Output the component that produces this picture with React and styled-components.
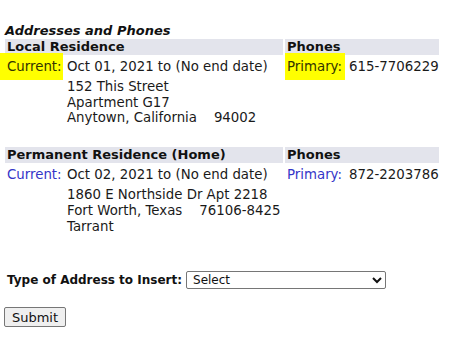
import React from "react";
import styled, { createGlobalStyle } from "styled-components";

const Global = createGlobalStyle`
  html, body { margin: 0; padding: 0; background: #ffffff; }
  body { font-family: "DejaVu Sans", Verdana, sans-serif; font-size: 13.33px; color: #1a1a1a; }
`;

const Page = styled.div`
  padding: 22px 0 0 5px;
  width: 469px;
  box-sizing: border-box;
`;

const Title = styled.h2`
  margin: 0;
  font-size: 13px;
  font-weight: bold;
  font-style: italic;
  line-height: 17px;
  color: #111;
`;

const Section = styled.div`
  display: grid;
  grid-template-columns: 278px 154px;
  column-gap: 2px;
  margin-top: ${(p) => p.$top}px;
`;

const HeadCell = styled.div`
  background: #e3e4ec;
  height: 16px;
  line-height: 16px;
  padding-left: 2px;
  font-size: 13px;
  font-weight: bold;
  color: #111;
`;

const Column = styled.div`
  display: flex;
  flex-direction: column;
`;

const EntryRow = styled.div`
  display: grid;
  grid-template-columns: ${(p) => p.$labelW}px auto;
  padding-left: 2px;
  margin-top: 3px;
  line-height: 17px;
`;

const Label = styled.span`
  position: relative;
  justify-self: start;
  color: ${(p) => (p.$hl ? "#333300" : "#3535c8")};
  z-index: 0;
  &::before {
    content: "";
    display: ${(p) => (p.$hl ? "block" : "none")};
    position: absolute;
    z-index: -1;
    top: -5px;
    bottom: -5px;
    left: ${(p) => p.$hlLeft}px;
    right: ${(p) => p.$hlRight}px;
    background: #ffff00;
  }
`;

const Value = styled.span`
  color: #1a1a1a;
  white-space: nowrap;
`;

const AddressLines = styled.div`
  margin-top: 4px;
  padding-left: 62px;
  line-height: 15.7px;
  white-space: pre;
`;

const FormRow = styled.div`
  display: flex;
  align-items: center;
  gap: 4px;
  margin-top: 37px;
  padding-left: 2px;
`;

const FormLabel = styled.label`
  font-size: 12px;
  font-weight: bold;
  color: #111;
`;

const Select = styled.select`
  width: 200px;
  height: 18px;
  font-family: "DejaVu Sans", Verdana, sans-serif;
  font-size: 12px;
  padding: 0 0 0 2px;
  border: 1px solid #767676;
  border-radius: 2px;
  background: #fff;
  color: #111;
`;

const Submit = styled.button`
  margin-top: 18px;
  margin-left: -1px;
  width: 62px;
  height: 20px;
  padding: 0;
  font-family: "DejaVu Sans", Verdana, sans-serif;
  font-size: 13px;
  color: #111;
  background: #efefef;
  border: 1px solid #767676;
  border-radius: 2px;
`;

function Residence({ top, title, hl, date, lines, phone }) {
  return (
    <Section $top={top}>
      <HeadCell>{title}</HeadCell>
      <HeadCell>Phones</HeadCell>
      <Column>
        <EntryRow $labelW={60}>
          <Label $hl={hl} $hlLeft={-7} $hlRight={-1}>Current:</Label>
          <Value>{date}</Value>
        </EntryRow>
        <AddressLines>{lines.join("\n")}</AddressLines>
      </Column>
      <Column>
        <EntryRow $labelW={62}>
          <Label $hl={hl} $hlLeft={-2} $hlRight={-3}>Primary:</Label>
          <Value>{phone}</Value>
        </EntryRow>
      </Column>
    </Section>
  );
}

export default function App() {
  return (
    <>
      <Global />
      <Page>
        <Title>Addresses and Phones</Title>
        <Residence
          top={0}
          title="Local Residence"
          hl
          date="Oct 01, 2021 to (No end date)"
          lines={["152 This Street", "Apartment G17", "Anytown, California    94002"]}
          phone="615-7706229"
        />
        <Residence
          top={21}
          title="Permanent Residence (Home)"
          date="Oct 02, 2021 to (No end date)"
          lines={["1860 E Northside Dr Apt 2218", "Fort Worth, Texas    76106-8425", "Tarrant"]}
          phone="872-2203786"
        />
        <FormRow>
          <FormLabel htmlFor="addrType">Type of Address to Insert:</FormLabel>
          <Select id="addrType" defaultValue="">
            <option value="">Select</option>
          </Select>
        </FormRow>
        <Submit type="button">Submit</Submit>
      </Page>
    </>
  );
}
